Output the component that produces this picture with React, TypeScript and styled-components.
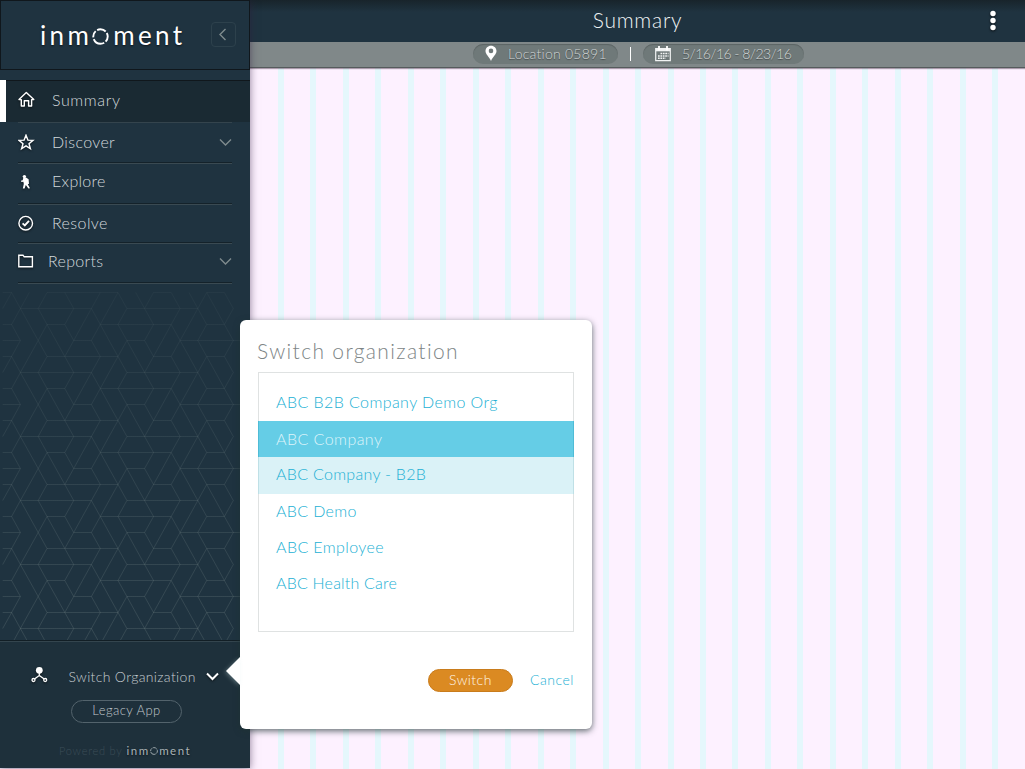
import React from "react";
import styled, { createGlobalStyle, css } from "styled-components";

const GlobalStyle = createGlobalStyle`
  * { box-sizing: border-box; }
  body { margin: 0; background: #fdf1ff; font-family: Lato, "Open Sans", sans-serif; font-weight: 300; }
  button { font: inherit; border: 0; background: none; padding: 0; cursor: pointer; }
  h1, h2, ul, p { margin: 0; padding: 0; font-weight: 300; }
  ul { list-style: none; }
`;

const Page = styled.div`
  display: flex;
  width: 1025px;
  height: 769px;
  overflow: hidden;
  position: relative;
`;

const Sidebar = styled.aside`
  width: 250px;
  height: 768px;
  flex: none;
  display: flex;
  flex-direction: column;
  background: #1f3340;
  box-shadow: 0 1px 8px rgba(50, 30, 60, 0.55);
  position: relative;
  z-index: 1;
`;

const Brand = styled.div`
  height: 70px;
  flex: none;
  border: 1px solid #10171c;
  display: flex;
  align-items: flex-start;
  padding: 21px 13px 0 39px;
  justify-content: space-between;
`;

const Wordmark = styled.div<{ $small?: boolean }>`
  display: flex;
  align-items: baseline;
  color: ${(p) => (p.$small ? "#a9b3b7" : "#fff")};
  font-weight: 400;
  font-size: ${(p) => (p.$small ? 11.5 : 26)}px;
  line-height: ${(p) => (p.$small ? 14 : 26)}px;
  letter-spacing: ${(p) => (p.$small ? 1.5 : 3.35)}px;
  text-shadow: 0 1px 2px rgba(0, 0, 0, 0.6);
  svg {
    width: ${(p) => (p.$small ? 8 : 17)}px;
    height: ${(p) => (p.$small ? 8 : 17)}px;
    margin-right: ${(p) => (p.$small ? 1.5 : 4)}px;
    align-self: flex-end;
    margin-bottom: 3px;
  }
`;

const Collapse = styled.button`
  width: 25px;
  height: 25px;
  flex: none;
  border: 1px solid #2d414c;
  border-radius: 4px;
  display: grid;
  place-items: center;
`;

const Nav = styled.ul`
  margin-top: 10px;
`;

const NavItem = styled.li<{ $h: number; $active?: boolean; $up?: number }>`
  height: ${(p) => p.$h}px;
  padding: 0 18px ${(p) => p.$up ?? 0}px 18px;
  display: flex;
  align-items: center;
  color: #d3d9dc;
  font-size: 16px;
  background-repeat: no-repeat;
  background-image: linear-gradient(#14222a, #14222a), linear-gradient(#3a4a52, #3a4a52);
  background-size: 214px 1px;
  background-position: 18px calc(100% - 1px), 18px 100%;
  ${(p) =>
    p.$active &&
    css`
      background-image: linear-gradient(#34444d, #34444d), linear-gradient(#fff, #fff),
        linear-gradient(#10171c, #10171c), linear-gradient(#1a2a33, #1a2a33);
      background-size: 214px 1px, 6px 42px, 100% 1px, 100% 42px;
      background-position: 18px 100%, 0 0, 0 0, 0 0;
    `}
`;

const NavIcon = styled.span<{ $w: number }>`
  width: ${(p) => p.$w}px;
  display: flex;
  filter: drop-shadow(0 1px 1px rgba(0, 0, 0, 0.6));
`;

const Label = styled.span<{ $ls?: number }>`
  letter-spacing: ${(p) => p.$ls ?? 0}px;
  white-space: nowrap;
  flex: 1;
`;

const NavLabel = styled(Label)`
  padding-bottom: 1.5px;
`;

const Pattern = styled.div`
  flex: 1;
  min-height: 0;
  overflow: hidden;
  svg { display: block; }
`;

const Footer = styled.footer`
  height: 128px;
  flex: none;
  background: #1e303b;
  border-top: 1px solid #121e25;
  box-shadow: inset 0 1px 0 #34454e;
  display: flex;
  flex-direction: column;
`;

const SwitchRow = styled.div`
  display: flex;
  align-items: center;
  height: 20px;
  margin: 25px 0 0 31px;
  color: #c6cdd1;
  font-size: 14px;
`;

const LegacyButton = styled.button`
  width: 111px;
  height: 23px;
  margin: 14px 0 0 71px;
  border: 1px solid #53636c;
  border-radius: 12px;
  color: #c0c8cc;
  font-size: 13px;
  line-height: 19px;
  padding-bottom: 2px;
  letter-spacing: 0.45px;
`;

const Powered = styled.div`
  display: flex;
  align-items: baseline;
  margin: 21px 0 0 59px;
  height: 16px;
  font-size: 11px;
  color: #3c4d57;
  letter-spacing: 0.75px;
  gap: 4px;
`;

const Main = styled.main`
  flex: 1;
  display: flex;
  flex-direction: column;
`;

const TopBar = styled.header`
  height: 42px;
  background: linear-gradient(#18242b 0, #1f3340 12px);
  display: grid;
  grid-template-columns: 1fr auto 1fr;
  align-items: center;
  color: #eef2f4;
`;

const PageTitle = styled.h1`
  font-size: 21px;
  line-height: 24px;
  letter-spacing: 0.75px;
  margin-bottom: 3px;
`;

const Menu = styled.button`
  justify-self: end;
  margin: 0 28.5px 1px 0;
  display: flex;
  filter: drop-shadow(0 1px 1px rgba(0, 0, 0, 0.7));
`;

const FilterBar = styled.div`
  height: 26px;
  background: #808889;
  border-bottom: 1px solid #555b5c;
  box-shadow: 0 1px 1px rgba(90, 70, 90, 0.5);
  display: flex;
  align-items: flex-start;
  padding: 2px 0 0 223px;
  z-index: 0;
`;

const Pill = styled.button<{ $w: number }>`
  width: ${(p) => p.$w}px;
  height: 20px;
  border-radius: 10px;
  background: #6f7979;
  box-shadow: inset 0 1px 1px #5b6464;
  display: flex;
  align-items: center;
  padding: 0 12px 1px;
  color: #d0d5d6;
  font-size: 14px;
  text-shadow: 0 1px 1px rgba(0, 0, 0, 0.45);
  text-align: left;
  svg { flex: none; margin-right: 11px; }
`;

const Divider = styled.i`
  width: 1px;
  height: 14px;
  background: #fff;
  margin: 3px 12px 0;
`;

const Canvas = styled.div`
  flex: 1;
  background: repeating-linear-gradient(90deg, #e5f7fc 0 6px, #fdf1ff 6px 32.46px);
  background-position: 28px 0;
  background-repeat: no-repeat;
`;

const Dialog = styled.section`
  position: absolute;
  z-index: 2;
  left: 240px;
  top: 320px;
  width: 352px;
  height: 409px;
  border-radius: 6px;
  background: #fff;
  box-shadow: 0 2px 6px rgba(30, 50, 50, 0.7);
  padding: 19px 18px 0 18px;
  &::before {
    content: "";
    position: absolute;
    left: -14px;
    top: 337px;
    border: 14px solid transparent;
    border-left-width: 0;
    border-right-color: #fff;
    filter: drop-shadow(-1px 1px 2px rgba(200, 225, 225, 0.35));
  }
`;

const DialogTitle = styled.h2`
  font-size: 21px;
  line-height: 24px;
  letter-spacing: 1.35px;
  color: #7d8586;
  margin-left: -1px;
`;

const OrgList = styled.ul`
  margin-top: 9px;
  width: 316px;
  height: 260px;
  border: 1px solid #dfe2e2;
  padding-top: 12px;
`;

const Org = styled.li<{ $state?: "selected" | "hover" }>`
  height: 36px;
  margin: 0 -1px;
  padding: 0 18px;
  line-height: 34px;
  font-size: 16px;
  color: #22b0d4;
  ${(p) =>
    p.$state === "selected" &&
    css`
      background: #65cde6;
      color: #dff4fa;
      border: solid #4fbcd6;
      border-width: 0 1px;
      padding: 0 17px;
      line-height: 35px;
    `}
  ${(p) =>
    p.$state === "hover" &&
    css`
      height: 37px;
      background: #daf2f7;
      border: solid #bfe0e6;
      border-width: 0 1px;
      padding: 0 17px;
    `}
`;

const Actions = styled.div`
  display: flex;
  justify-content: flex-end;
  align-items: center;
  gap: 17px;
  margin-top: 37px;
  font-size: 14px;
`;

const Primary = styled.button`
  width: 85px;
  height: 23px;
  border-radius: 12px;
  background: #db8a22;
  border: 1px solid #c97c1c;
  color: #fff6ea;
  letter-spacing: 0.45px;
  line-height: 19px;
  padding-bottom: 2px;
`;

const Cancel = styled.button`
  color: #22b0d4;
  letter-spacing: 0.55px;
  padding-bottom: 2px;
`;

const Ring = () => (
  <svg viewBox="0 0 16 16" fill="none" stroke="currentColor" strokeWidth="1.8">
    <circle
      cx="8"
      cy="8"
      r="6.8"
      pathLength="360"
      strokeDasharray="75 14 100 14 55 14 74 14"
      strokeDashoffset="30"
    />
  </svg>
);

const Logo = ({ small }: { small?: boolean }) => (
  <Wordmark $small={small}>
    <span>inm</span>
    <Ring />
    <span>ment</span>
  </Wordmark>
);

const Chevron = ({ color = "#7f8b8d", w = 1.4 }: { color?: string; w?: number }) => (
  <svg width="13" height="9" viewBox="0 0 13 9" fill="none" stroke={color} strokeWidth={w}>
    <path d="M1 1.5 6.5 7 12 1.5" />
  </svg>
);

const HomeIcon = () => (
  <svg width="17" height="17" viewBox="0 0 17 17" fill="none" stroke="#fff" strokeWidth="1.4" strokeLinejoin="round">
    <path d="M1 8.6 8.3 1.5 15.8 8.6H13.6V15H10.6V9.8H6.3V15H3.3V8.6Z" />
  </svg>
);

const StarIcon = () => (
  <svg width="17" height="17" viewBox="0 0 17 17" fill="none" stroke="#fff" strokeWidth="1.4">
    <path d="M8 1.2 9.9 6.1 15 6.4 11 9.7 12.4 14.7 8 11.9 3.6 14.7 5 9.7 1 6.4 6.1 6.1Z" />
  </svg>
);

const HikerIcon = () => (
  <svg width="17" height="15" viewBox="0 0 17 15" fill="#fff">
    <circle cx="6.4" cy="2.6" r="1.7" />
    <path d="M5 4.300 8 3.500 10.600 5.300 11 9.800 9.800 10.200 12 14.200 10.400 14.400 7.800 11 6.600 14.400 4.800 14.400 5.800 10 5.400 7.800 3.200 8 3.200 6.600 4.800 6.200Z" />
  </svg>
);

const CheckIcon = () => (
  <svg width="16" height="16" viewBox="0 0 16 16" fill="none" stroke="#fff" strokeWidth="1.4">
    <circle cx="7.7" cy="8.2" r="6.8" />
    <path d="M4.600 8.400 6.800 10.400 11 5.800" strokeWidth="1.9" />
  </svg>
);

const FolderIcon = () => (
  <svg width="16" height="14" viewBox="0 0 16 14" fill="none" stroke="#fff" strokeWidth="1.4">
    <path d="M.8 1.2H5L6.2 2.8H14.4V12.7H.8Z" />
  </svg>
);

const OrgIcon = () => (
  <svg width="17" height="20" viewBox="0 0 17 20" fill="none" stroke="#fff" strokeWidth="1.3">
    <circle cx="8.3" cy="4.300" r="3.400" fill="#fff" stroke="none" />
    <path d="M8.300 6.300V9.500L3.500 13.100M8.300 9.500 13.200 13.100" />
    <circle cx="2.500" cy="14" r="1.500" />
    <circle cx="14.200" cy="14" r="1.500" />
  </svg>
);

const PinIcon = () => (
  <svg width="12" height="17" viewBox="0 0 12 17" fill="#fff">
    <path
      fillRule="evenodd"
      d="M6 .8C2.9.8.5 3.1.5 6.1.5 9.5 4 11.5 6 16 8 11.5 11.5 9.5 11.5 6.1 11.5 3.1 9.1.8 6 .8ZM6 3.6A2.3 2.3 0 1 1 6 8.2 2.3 2.3 0 1 1 6 3.6Z"
    />
  </svg>
);

const CalendarIcon = () => (
  <svg width="16" height="16" viewBox="0 0 16 16" fill="none" stroke="#f1f3f3">
    <path d="M.7 2.5H15.3V14.6H.7Z" strokeWidth="1.2" />
    <path d="M1 4H15" strokeWidth="2.6" />
    <path d="M4 0V4.5M12 0V4.5" stroke="#fff" strokeWidth="1.8" />
    <path d="M5.5 7.6H13.5M3 9.9H13.5M3 12.2H10.5" strokeWidth="1.5" strokeDasharray="1.7 .7" />
  </svg>
);

/* Triangular lattice: each entry is a pair of column indexes on one row. */
const H_LINES = [
  [[2, 10], [14, 22]],
  [[0, 1], [5, 7], [11, 19], [23, 25]],
  [[0, 2], [8, 10], [14, 16], [20, 28]],
  [[0, 1], [5, 13], [17, 19], [23, 25]],
];
const D_LINES = [
  [[2, 1], [2, 3], [4, 5], [8, 7], [10, 9], [10, 11], [12, 11], [14, 13], [16, 17], [20, 19], [22, 21], [22, 23], [24, 25], [26, 25]],
  [[1, 2], [3, 4], [5, 4], [5, 6], [7, 8], [9, 8], [11, 10], [11, 12], [13, 14], [17, 16], [19, 18], [19, 20], [21, 20], [23, 22], [25, 26]],
  [[2, 1], [4, 3], [4, 5], [6, 7], [8, 7], [10, 11], [12, 13], [14, 13], [14, 15], [16, 17], [18, 17], [20, 19], [20, 21], [22, 23], [26, 25]],
  [[1, 0], [1, 2], [3, 2], [5, 4], [7, 8], [11, 10], [13, 12], [13, 14], [15, 16], [17, 16], [19, 20], [21, 22], [23, 22], [23, 24], [25, 26]],
];

const latticePath = () => {
  const x = (k: number) => (2.7 + k * 8.87).toFixed(1);
  let d = "";
  for (let row = 0; row < 23; row++) {
    const y = 8.5 + row * 16;
    const r = (row + 3) % 4;
    H_LINES[r].forEach(([a, b]) => (d += `M${x(a)} ${y}H${x(b)}`));
    D_LINES[r].forEach(([a, b]) => (d += `M${x(a)} ${y}L${x(b)} ${y + 16}`));
  }
  return d;
};

const Lattice = () => (
  <svg width="250" height="357" viewBox="0 0 250 357" fill="none">
    <defs>
      <linearGradient id="fade" x1="0" y1="0" x2="0" y2="357" gradientUnits="userSpaceOnUse">
        <stop offset="0" stopColor="#8a9a98" stopOpacity="0.06" />
        <stop offset="0.5" stopColor="#8a9a98" stopOpacity="0.17" />
        <stop offset="1" stopColor="#8a9a98" stopOpacity="0.24" />
      </linearGradient>
    </defs>
    <path d={latticePath()} stroke="url(#fade)" strokeWidth="0.9" />
  </svg>
);

export default function App() {
  return (
    <Page>
      <GlobalStyle />
      <Sidebar>
        <Brand>
          <Logo />
          <Collapse aria-label="Collapse">
            <svg width="9" height="13" viewBox="0 0 9 13" fill="none" stroke="#7f8b8d" strokeWidth="1.4">
              <path d="M6.5 1 1 6.5 6.5 12" />
            </svg>
          </Collapse>
        </Brand>
        <Nav>
          <NavItem $h={43} $active $up={4}>
            <NavIcon $w={34}><HomeIcon /></NavIcon>
            <Label $ls={0.6}>Summary</Label>
          </NavItem>
          <NavItem $h={41} $up={3}>
            <NavIcon $w={34}><StarIcon /></NavIcon>
            <NavLabel $ls={0.35}>Discover</NavLabel>
            <Chevron />
          </NavItem>
          <NavItem $h={41} $up={7}>
            <NavIcon $w={34}><HikerIcon /></NavIcon>
            <NavLabel $ls={0.3}>Explore</NavLabel>
          </NavItem>
          <NavItem $h={39} $up={3}>
            <NavIcon $w={34}><CheckIcon /></NavIcon>
            <NavLabel $ls={0.4}>Resolve</NavLabel>
          </NavItem>
          <NavItem $h={40} $up={6}>
            <NavIcon $w={30}><FolderIcon /></NavIcon>
            <NavLabel $ls={0.3}>Reports</NavLabel>
            <Chevron />
          </NavItem>
        </Nav>
        <Pattern><Lattice /></Pattern>
        <Footer>
          <SwitchRow>
            <NavIcon $w={37.5}><OrgIcon /></NavIcon>
            <Label $ls={0.35}>Switch Organization</Label>
            <NavIcon $w={44}><Chevron color="#fff" w={2} /></NavIcon>
          </SwitchRow>
          <LegacyButton>Legacy App</LegacyButton>
          <Powered>
            <span>Powered by</span>
            <Logo small />
          </Powered>
        </Footer>
      </Sidebar>
      <Main>
        <TopBar>
          <span />
          <PageTitle>Summary</PageTitle>
          <Menu aria-label="Menu">
            <svg width="8" height="21" viewBox="0 0 8 21" fill="#fff">
              <circle cx="4" cy="3.5" r="2.7" />
              <circle cx="4" cy="10.5" r="2.7" />
              <circle cx="4" cy="17.5" r="2.7" />
            </svg>
          </Menu>
        </TopBar>
        <FilterBar>
          <Pill $w={145}><PinIcon /><Label $ls={0.25}>Location 05891</Label></Pill>
          <Divider />
          <Pill $w={161}><CalendarIcon /><Label $ls={-0.53}>5/16/16 - 8/23/16</Label></Pill>
        </FilterBar>
        <Canvas />
      </Main>
      <Dialog>
        <DialogTitle>Switch organization</DialogTitle>
        <OrgList>
          <Org><Label $ls={0.42}>ABC B2B Company Demo Org</Label></Org>
          <Org $state="selected"><Label $ls={0.45}>ABC Company</Label></Org>
          <Org $state="hover"><Label $ls={0.3}>ABC Company - B2B</Label></Org>
          <Org><Label $ls={0.35}>ABC Demo</Label></Org>
          <Org><Label $ls={0.4}>ABC Employee</Label></Org>
          <Org><Label $ls={0.2}>ABC Health Care</Label></Org>
        </OrgList>
        <Actions>
          <Primary>Switch</Primary>
          <Cancel>Cancel</Cancel>
        </Actions>
      </Dialog>
    </Page>
  );
}
